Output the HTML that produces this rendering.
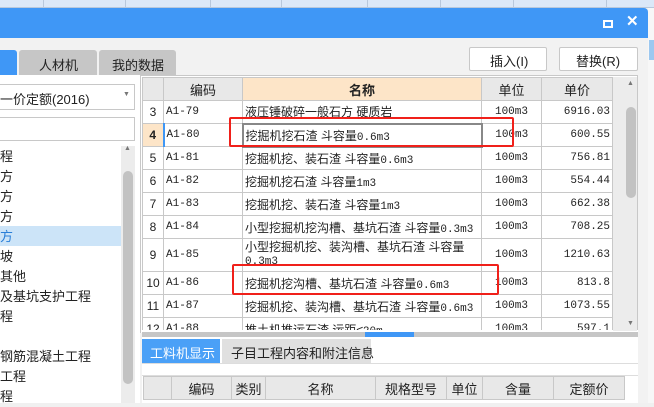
<!DOCTYPE html>
<html><head><meta charset="utf-8"><style>
*{margin:0;padding:0;box-sizing:border-box}
body{width:654px;height:403px;overflow:hidden;position:relative;background:#f0f0f0;font-family:"Liberation Sans","Noto Sans CJK SC",sans-serif;font-size:12px;color:#222}
.a{position:absolute}
.t{position:absolute;white-space:nowrap}
table{border-collapse:collapse;table-layout:fixed;position:absolute}
td{border:1px solid #c8c8c8;height:23px;padding:0 2px;white-space:nowrap;overflow:hidden;background:#fff;font-size:12px}
.m{font-family:"Liberation Mono","Noto Sans CJK SC",monospace;font-size:11px}
.r{text-align:right}.c{text-align:center}
th{border:1px solid #c8c8c8;background:#e8e8e8;font-weight:normal;height:23px;font-size:13px}
</style></head><body>
<!-- top strip -->
<div class="a" style="left:0;top:0;width:654px;height:8px;background:#dbe8f8;border-bottom:1px solid #b8c8dc"></div>
<div class="a" style="left:43px;top:0;width:1px;height:8px;background:#b8c8dc"></div>
<div class="a" style="left:125px;top:0;width:1px;height:8px;background:#b8c8dc"></div>
<div class="a" style="left:210px;top:0;width:1px;height:8px;background:#b8c8dc"></div>
<div class="a" style="left:281px;top:0;width:1px;height:8px;background:#b8c8dc"></div>
<div class="a" style="left:367px;top:0;width:1px;height:8px;background:#b8c8dc"></div>
<div class="a" style="left:440px;top:0;width:1px;height:8px;background:#b8c8dc"></div>
<div class="a" style="left:513px;top:0;width:1px;height:8px;background:#b8c8dc"></div>
<div class="a" style="left:606px;top:0;width:1px;height:8px;background:#b8c8dc"></div>
<!-- right outside -->
<div class="a" style="left:648px;top:8px;width:6px;height:395px;background:#f7f7f7"></div>
<div class="a" style="left:649px;top:40px;width:5px;height:20px;background:#9cc8f0"></div>
<!-- titlebar -->
<div class="a" style="left:0;top:8px;width:648px;height:30px;background:#3f97f6;border-radius:0 4px 0 0"></div>
<div class="a" style="left:603px;top:20px;width:10px;height:8px;border:2px solid #fff"></div>
<div class="t" style="left:626px;top:12px;color:#fff;font-size:15px;font-weight:bold">✕</div>
<!-- body -->
<div class="a" style="left:0;top:38px;width:648px;height:365px;background:#f2f2f2"></div>
<!-- tabs -->
<div class="a" style="left:0;top:50px;width:17px;height:25px;background:#3f97f6;border-radius:0 3px 0 0"></div>
<div class="a" style="left:19px;top:50px;width:78px;height:25px;background:#c6c6c6;border-radius:3px 3px 0 0"></div>
<div class="t" style="left:39px;top:55px;font-size:13px">人材机</div>
<div class="a" style="left:99px;top:50px;width:77px;height:25px;background:#c6c6c6;border-radius:3px 3px 0 0"></div>
<div class="t" style="left:112px;top:55px;font-size:13px">我的数据</div>
<div class="a" style="left:469px;top:47px;width:78px;height:24px;background:#fff;border:1px solid #c8c8c8;border-radius:2px"></div>
<div class="t" style="left:490px;top:51px;font-size:13px">插入(I)</div>
<div class="a" style="left:559px;top:47px;width:79px;height:24px;background:#fff;border:1px solid #c8c8c8;border-radius:2px"></div>
<div class="t" style="left:576px;top:51px;font-size:13px">替换(R)</div>
<!-- left panel -->
<div class="a" style="left:0;top:75px;width:140px;height:328px;background:#fff"></div>
<div class="a" style="left:0;top:84px;width:135px;height:26px;border:1px solid #c8c8c8;border-left:none;background:#fff"></div>
<div class="t" style="left:0;top:89px;font-size:13px">一价定额(2016)</div>
<div class="t" style="left:123px;top:91px;font-size:7px;color:#777">▼</div>
<div class="a" style="left:0;top:117px;width:135px;height:24px;border:1px solid #c8c8c8;border-left:none;background:#fff"></div>
<div class="a" style="left:0;top:226px;width:121px;height:20px;background:#cce4f8"></div>
<div class="a" style="left:121px;top:146px;width:14px;height:257px;background:#ececec"></div>
<div class="a" style="left:123px;top:171px;width:10px;height:213px;background:#c2c2c2;border-radius:5px"></div>
<div class="t" style="left:124px;top:145px;font-size:7px;color:#777">▲</div>
<div style="position:absolute;left:0;top:147px;line-height:20px;font-size:13px">
<div>程</div><div>方</div><div>方</div><div>方</div><div style="color:#2a7fd8">方</div><div>坡</div><div>其他</div><div>及基坑支护工程</div><div>程</div><div>&nbsp;</div><div>钢筋混凝土工程</div><div>工程</div><div>程</div></div>
<!-- main table -->
<div class="a" style="left:140px;top:75px;width:498px;height:258px;background:#fff;border:1px solid #c8c8c8"></div>
<table style="left:142px;top:77px;width:470px">
<colgroup><col style="width:21px"><col style="width:79px"><col style="width:239px"><col style="width:60px"><col style="width:71px"></colgroup>
<tr><th></th><th>编码</th><th style="background:#fde5c8;font-weight:bold">名称</th><th>单位</th><th>单价</th></tr>
<tr><td class="c">3</td><td class="m">A1-79</td><td>液压锤破碎一般石方 硬质岩</td><td class="c m">100m3</td><td class="r m">6916.03</td></tr>
<tr><td class="c" style="background:#fde5c8;font-weight:bold">4</td><td class="m" style="border-left:2px solid #3f97f6">A1-80</td><td style="border:2px solid #888">挖掘机挖石渣 斗容量<span class="m">0.6m3</span></td><td class="c m">100m3</td><td class="r m">600.55</td></tr>
<tr><td class="c">5</td><td class="m">A1-81</td><td>挖掘机挖、装石渣 斗容量<span class="m">0.6m3</span></td><td class="c m">100m3</td><td class="r m">756.81</td></tr>
<tr><td class="c">6</td><td class="m">A1-82</td><td>挖掘机挖石渣 斗容量<span class="m">1m3</span></td><td class="c m">100m3</td><td class="r m">554.44</td></tr>
<tr><td class="c">7</td><td class="m">A1-83</td><td>挖掘机挖、装石渣 斗容量<span class="m">1m3</span></td><td class="c m">100m3</td><td class="r m">662.38</td></tr>
<tr><td class="c">8</td><td class="m">A1-84</td><td>小型挖掘机挖沟槽、基坑石渣 斗容量<span class="m">0.3m3</span></td><td class="c m">100m3</td><td class="r m">708.25</td></tr>
<tr><td class="c" style="height:33px">9</td><td class="m">A1-85</td><td style="white-space:normal;line-height:13px;vertical-align:top;padding-top:2px">小型挖掘机挖、装沟槽、基坑石渣 斗容量 <span class="m">0.3m3</span></td><td class="c m">100m3</td><td class="r m">1210.63</td></tr>
<tr><td class="c">10</td><td class="m">A1-86</td><td>挖掘机挖沟槽、基坑石渣 斗容量<span class="m">0.6m3</span></td><td class="c m">100m3</td><td class="r m">813.8</td></tr>
<tr><td class="c">11</td><td class="m">A1-87</td><td>挖掘机挖、装沟槽、基坑石渣 斗容量<span class="m">0.6m3</span></td><td class="c m">100m3</td><td class="r m">1073.55</td></tr>
<tr><td class="c">12</td><td class="m">A1-88</td><td>推土机推运石渣 运距≤<span class="m">20m</span></td><td class="c m">100m3</td><td class="r m">597.1</td></tr>
</table>
<div class="a" style="left:141px;top:330px;width:497px;height:3px;background:#fff"></div>
<div class="a" style="left:613px;top:77px;width:24px;height:254px;background:#ececec"></div>
<div class="a" style="left:626px;top:107px;width:10px;height:91px;background:#c2c2c2;border-radius:5px"></div>
<div class="t" style="left:627px;top:80px;font-size:7px;color:#777">▲</div>
<div class="t" style="left:627px;top:320px;font-size:7px;color:#777">▼</div>
<!-- red boxes -->
<div class="a" style="left:229px;top:117px;width:285px;height:30px;border:2px solid #f0201a;border-radius:2px"></div>
<div class="a" style="left:232px;top:264px;width:267px;height:31px;border:2px solid #f0201a;border-radius:2px"></div>
<!-- splitter -->
<div class="a" style="left:142px;top:332px;width:496px;height:5px;background:#c6c6c6"></div>
<div class="a" style="left:365px;top:332px;width:49px;height:5px;background:#3f97f6"></div>
<!-- bottom -->
<div class="a" style="left:142px;top:337px;width:496px;height:66px;background:#fff"></div>
<div class="a" style="left:142px;top:339px;width:78px;height:24px;background:#4aa0f7"></div>
<div class="t" style="left:150px;top:343px;color:#fff;font-size:13px">工料机显示</div>
<div class="a" style="left:222px;top:339px;width:149px;height:24px;background:#e0e0e0"></div>
<div class="t" style="left:231px;top:343px;font-size:13px">子目工程内容和附注信息</div>
<div class="a" style="left:142px;top:363px;width:496px;height:13px;background:#fff;border-top:1px solid #ddd;border-bottom:1px solid #ddd"></div>
<table style="left:143px;top:376px;width:481px">
<colgroup><col style="width:28px"><col style="width:60px"><col style="width:34px"><col style="width:110px"><col style="width:71px"><col style="width:36px"><col style="width:71px"><col style="width:71px"></colgroup>
<tr><th></th><th>编码</th><th>类别</th><th>名称</th><th>规格型号</th><th>单位</th><th>含量</th><th>定额价</th></tr>
</table>
</body></html>
